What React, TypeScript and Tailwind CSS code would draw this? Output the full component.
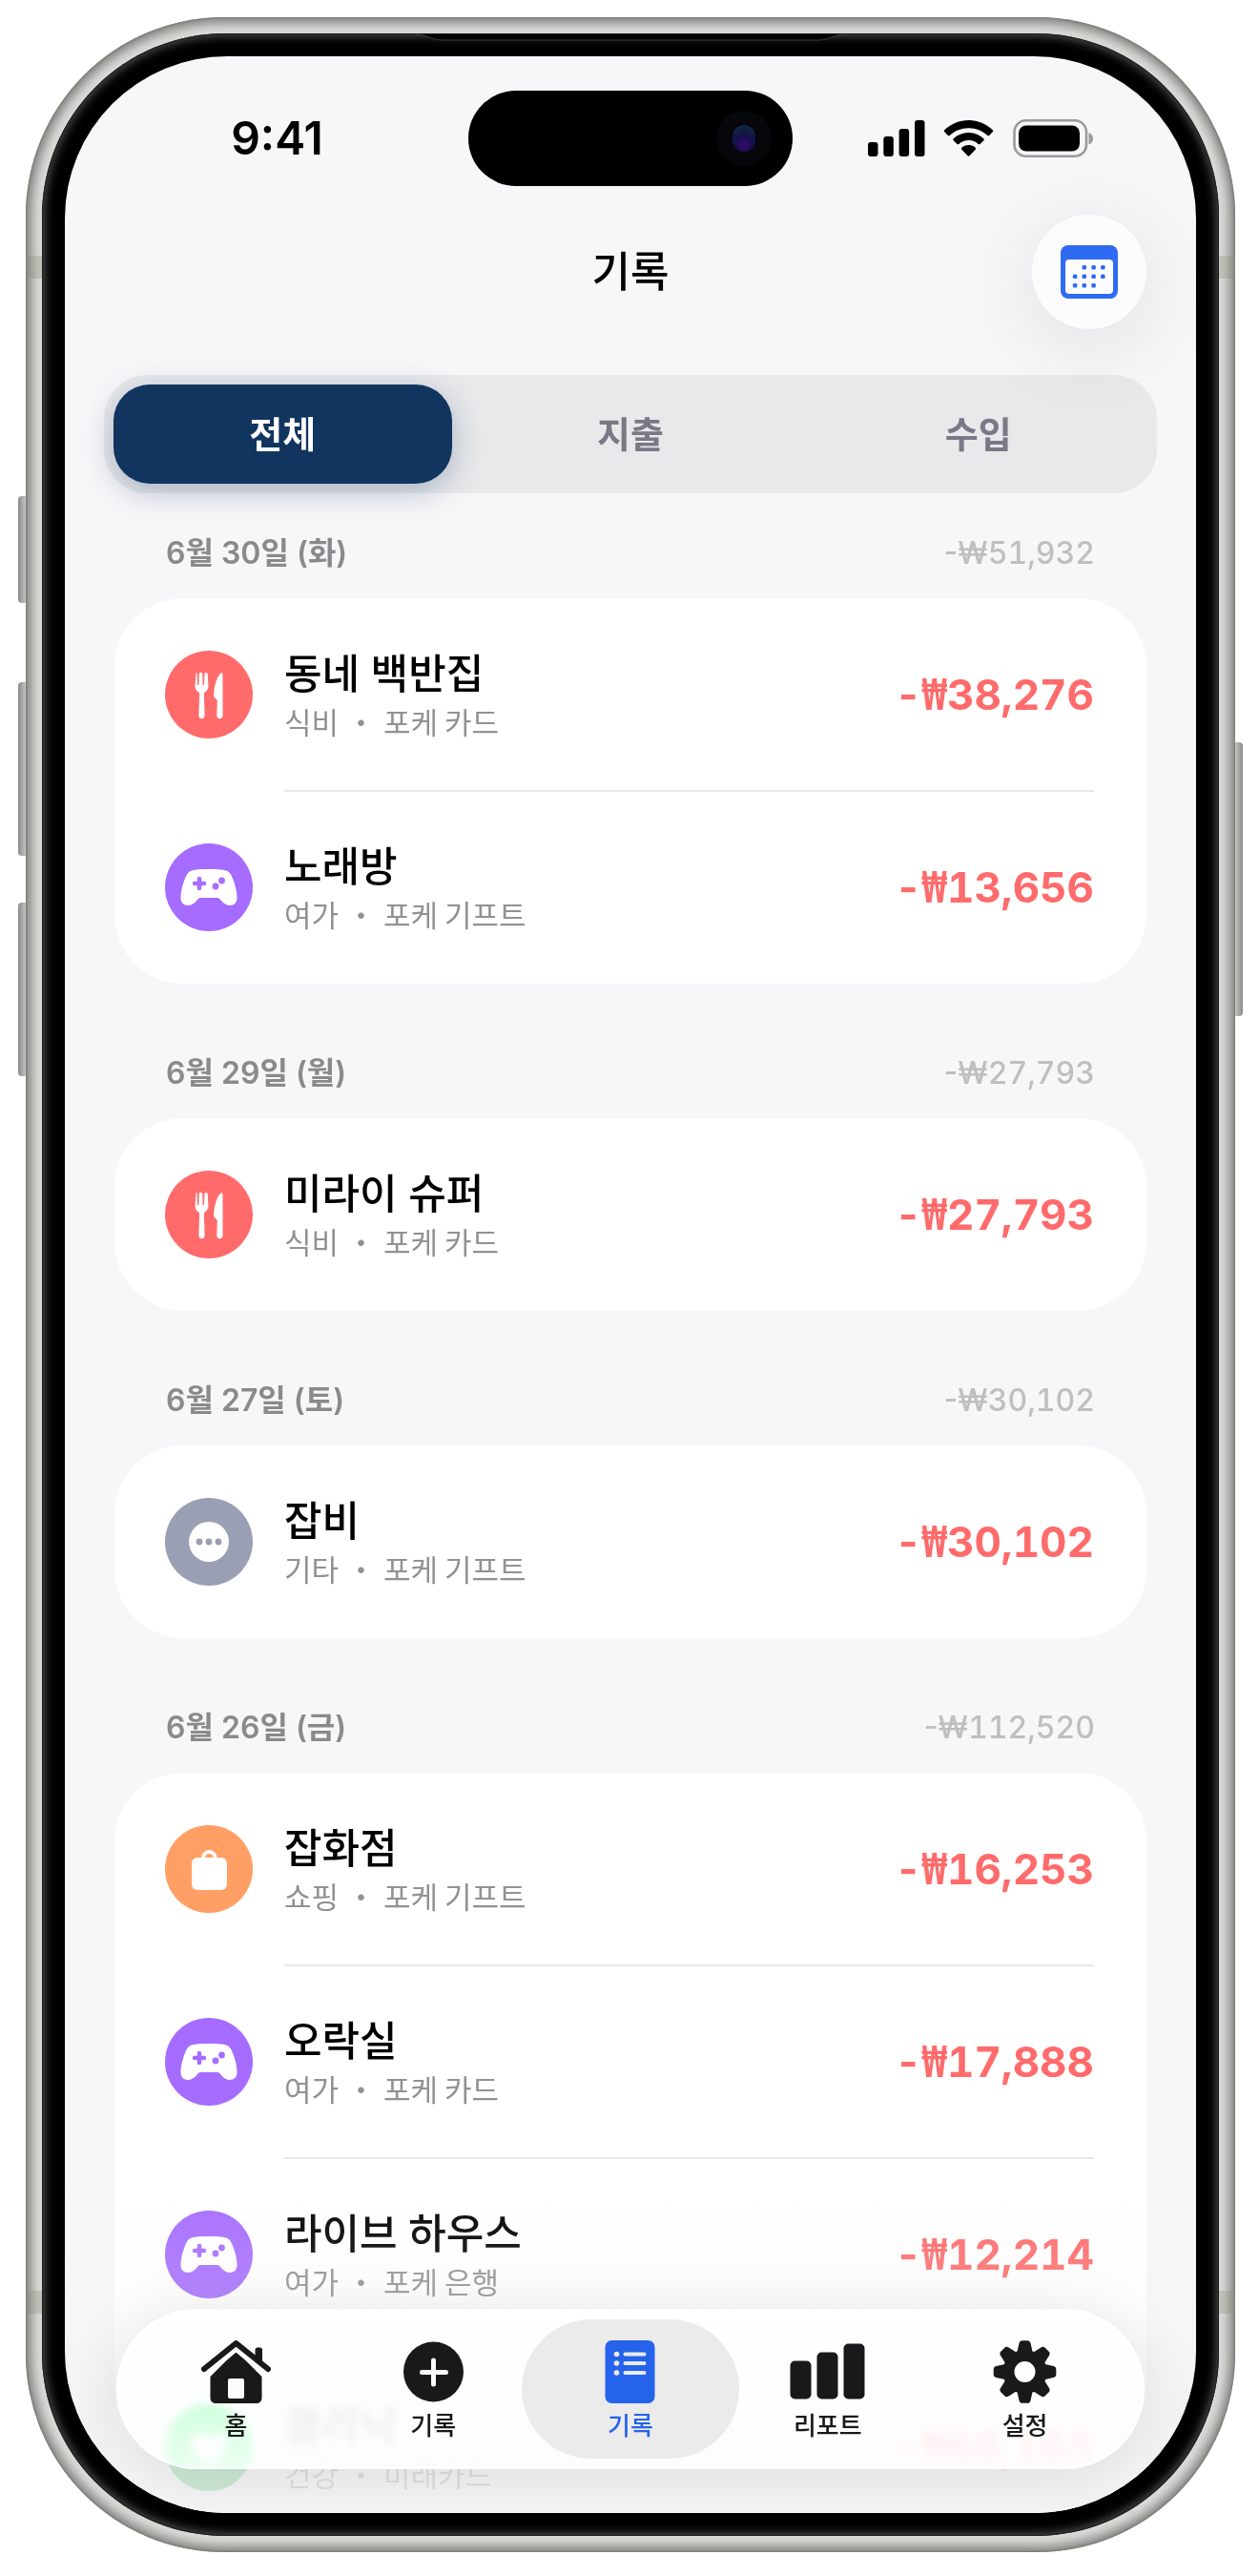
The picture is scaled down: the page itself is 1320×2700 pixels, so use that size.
import React, { useState } from 'react';
import { clsx } from 'clsx';

type Category = 'food' | 'play' | 'etc' | 'shop' | 'health';

interface Entry {
  title: string;
  label: string;
  wallet: string;
  amount: string;
  category: Category;
}

interface Day {
  date: string;
  total: string;
  entries: Entry[];
}

const days: Day[] = [
  {
    date: '6월 30일 (화)',
    total: '51,932',
    entries: [
      { title: '동네 백반집', label: '식비', wallet: '포케 카드', amount: '38,276', category: 'food' },
      { title: '노래방', label: '여가', wallet: '포케 기프트', amount: '13,656', category: 'play' },
    ],
  },
  {
    date: '6월 29일 (월)',
    total: '27,793',
    entries: [{ title: '미라이 슈퍼', label: '식비', wallet: '포케 카드', amount: '27,793', category: 'food' }],
  },
  {
    date: '6월 27일 (토)',
    total: '30,102',
    entries: [{ title: '잡비', label: '기타', wallet: '포케 기프트', amount: '30,102', category: 'etc' }],
  },
  {
    date: '6월 26일 (금)',
    total: '112,520',
    entries: [
      { title: '잡화점', label: '쇼핑', wallet: '포케 기프트', amount: '16,253', category: 'shop' },
      { title: '오락실', label: '여가', wallet: '포케 카드', amount: '17,888', category: 'play' },
      { title: '라이브 하우스', label: '여가', wallet: '포케 은행', amount: '12,214', category: 'play' },
      { title: '클리닉', label: '건강', wallet: '미래카드', amount: '66,165', category: 'health' },
    ],
  },
];

const badgeColor: Record<Category, string> = {
  food: 'bg-[#ff6b6b]',
  play: 'bg-[#a66cff]',
  etc: 'bg-[#9a9fb4]',
  shop: 'bg-[#ff9f66]',
  health: 'bg-[#34c759]',
};

function CategoryIcon({ category }: { category: Category }) {
  return (
    <svg viewBox="0 0 92 92" className="size-full" aria-hidden="true">
      {category === 'food' && (
        <g fill="#fff">
          <path d="M32 23c1 0 1.600.8 1.600 1.800L34 36h1.400l.3-11.500c0-1 .8-1.700 1.800-1.700s1.800.7 1.800 1.700L39.600 36H41l.4-11.200c0-1 .7-1.800 1.600-1.800 1 0 1.700.8 1.800 1.800l.6 11.700c.2 3.500-1.400 5.500-3.600 6.900-.8.500-1 1-.9 1.900l.7 22.500c0 2-1.200 3.500-3.100 3.500s-3.100-1.500-3.100-3.500l.7-22.500c0-.9-.2-1.400-1-1.900-2.200-1.400-3.700-3.400-3.500-6.900l.7-11.700c0-1 .7-1.800 1.700-1.800z" />
          <path d="M60.500 25v43c0 2-1.200 3.300-3.100 3.300s-3.100-1.300-3.100-3.300l.5-15c0-1-.3-1.600-1.200-2.200-1.700-1.200-2.600-2.500-2.500-4.800C51.500 37 54 29 57.500 24.500c1.500-2 3-1.800 3 .5z" />
        </g>
      )}
      {category === 'play' && (
        <>
          <path
            fill="#fff"
            d="M46 27c8 0 14 .4 18 1.500 3 .9 4.500 2.800 6 6C73 41 75.500 50 75.500 57c0 5-3 8-7.500 8-3.500 0-6-1.600-8.500-4.200C58 59 57 57 54.500 57h-17c-2.500 0-3.500 2-5 3.800C30 63.400 27.500 65 24 65c-4.500 0-7.500-3-7.500-8 0-7 2.500-16 5.500-22.500 1.500-3.200 3-5.100 6-6C32 27.400 38 27 46 27z"
          />
          <path d="M36 37v10M31 42h10" stroke="#a66cff" strokeWidth="4.500" strokeLinecap="round" />
          <circle cx="53" cy="45" r="3.400" fill="#a66cff" />
          <circle cx="59.500" cy="39" r="3.400" fill="#a66cff" />
        </>
      )}
      {category === 'etc' && (
        <>
          <circle cx="46" cy="46" r="21" fill="#fff" />
          <g fill="#9a9fb4">
            <circle cx="36" cy="46" r="3.400" />
            <circle cx="46" cy="46" r="3.400" />
            <circle cx="56" cy="46" r="3.400" />
          </g>
        </>
      )}
      {category === 'shop' && (
        <>
          <rect x="28" y="34" width="37" height="34" rx="6" fill="#fff" />
          <path d="M40 35c0-4 2.500-7 6.300-7s6.300 3 6.300 7" fill="none" stroke="#fff" strokeWidth="4" />
        </>
      )}
      {category === 'health' && (
        <path
          fill="#fff"
          d="M46 66C36 58 27 51 27 42c0-6 4-10 9.500-10 4 0 7.500 2 9.500 6 2-4 5.500-6 9.500-6C61 32 65 36 65 42c0 9-9 16-19 24z"
        />
      )}
    </svg>
  );
}

function CalendarIcon() {
  return (
    <svg viewBox="0 0 60 56" className="h-14 w-15" aria-hidden="true">
      <rect x="0" y="0" width="60" height="56" rx="8" fill="#2f6bf2" />
      <rect x="5" y="15" width="50" height="36" rx="4" fill="#fcfcfd" />
      <g fill="#2f6bf2">
        <rect x="22.500" y="21" width="4.600" height="4.600" rx="1.500" />
        <rect x="32.300" y="21" width="4.600" height="4.600" rx="1.500" />
        <rect x="42" y="21" width="4.600" height="4.600" rx="1.500" />
        <rect x="12.800" y="30.500" width="4.600" height="4.600" rx="1.500" />
        <rect x="22.500" y="30.500" width="4.600" height="4.600" rx="1.500" />
        <rect x="32.300" y="30.500" width="4.600" height="4.600" rx="1.500" />
        <rect x="42" y="30.500" width="4.600" height="4.600" rx="1.500" />
        <rect x="12.800" y="40" width="4.600" height="4.600" rx="1.500" />
        <rect x="22.500" y="40" width="4.600" height="4.600" rx="1.500" />
        <rect x="32.300" y="40" width="4.600" height="4.600" rx="1.500" />
      </g>
    </svg>
  );
}

function StatusIcons() {
  return (
    <svg viewBox="0 0 236 40" className="h-10 w-[236px]" aria-hidden="true">
      <rect x="0" y="24" width="10.500" height="15" rx="3" />
      <rect x="16.300" y="18" width="10.500" height="21" rx="3" />
      <rect x="32.600" y="10" width="10.500" height="29" rx="3" />
      <rect x="49" y="1" width="10.500" height="38" rx="3" />
      <path d="M105.500 1C115 1 124 4.800 130.800 11.200c.6.500.6 1.400.1 1.900l-3.700 3.800c-.5.500-1.300.5-1.900 0C120 12 113 9.200 105.500 9.200S91 12 85.700 16.900c-.6.500-1.400.5-1.900 0l-3.700-3.800c-.5-.5-.5-1.400.1-1.900C87 4.800 96 1 105.500 1z" />
      <path d="M105.500 14c6 0 11.500 2.300 15.800 6.200.6.500.6 1.400 0 2l-3.700 3.700c-.5.500-1.300.5-1.900 0-2.800-2.400-6.400-3.800-10.200-3.800s-7.400 1.400-10.200 3.800c-.6.500-1.400.5-1.900 0l-3.700-3.700c-.6-.6-.6-1.500 0-2C94 16.300 99.500 14 105.500 14z" />
      <path d="M105.500 27c2.700 0 5.200 1 7.100 2.700.6.500.6 1.400.1 2l-6.200 6.600c-.5.600-1.500.6-2 0l-6.200-6.600c-.5-.6-.5-1.500.1-2 1.900-1.700 4.400-2.700 7.100-2.700z" />
      <rect x="153.500" y="1.300" width="75.500" height="37.400" rx="12" fill="none" stroke="#9b9b9d" strokeWidth="2.600" />
      <rect x="158" y="6.500" width="64" height="27" rx="8" />
      <path d="M231.500 14c2.800 1 4.500 3.300 4.500 6.200s-1.700 5.200-4.500 6.200z" fill="#9b9b9d" />
    </svg>
  );
}

const navItems = [
  {
    label: '홈',
    icon: (
      <>
        <path d="M9.500 38 L36.500 11 L63.500 38 V60c0 3.500-2 6-5.500 6h-43C11.500 66 9.500 63.500 9.500 60z" />
        <path d="M2.500 31 L36.500 3 L70.500 31" fill="none" stroke="#fcfcfd" strokeWidth="15" strokeLinejoin="round" />
        <path d="M56.500 22V10c0-1.500 1-2.500 2.500-2.500h2.500c1.500 0 2.500 1 2.500 2.500v17z" />
        <path d="M3 30 L36.500 3 L70 30" fill="none" stroke="currentColor" strokeWidth="6" strokeLinecap="round" strokeLinejoin="round" />
        <rect x="28" y="40" width="17" height="21" rx="2" fill="#fcfcfd" />
      </>
    ),
  },
  {
    label: '기록',
    icon: (
      <>
        <circle cx="36.500" cy="33" r="31.500" />
        <path d="M36.500 21v25M24.500 33.500h25" stroke="#fcfcfd" strokeWidth="5" strokeLinecap="round" />
      </>
    ),
  },
  {
    label: '기록',
    icon: (
      <>
        <rect x="10.500" y="0" width="52" height="66" rx="7" />
        <g stroke="#ebebec" strokeWidth="4" strokeLinecap="round">
          <path d="M31.500 14.500h20M31.500 24h20M31.500 34h20" />
        </g>
        <g fill="#ebebec">
          <circle cx="22.500" cy="14.500" r="2.800" />
          <circle cx="22.500" cy="24" r="2.800" />
          <circle cx="22.500" cy="34" r="2.800" />
        </g>
      </>
    ),
  },
  {
    label: '리포트',
    icon: (
      <>
        <rect x="-2.500" y="21.500" width="22" height="40" rx="5" />
        <rect x="25.500" y="12.500" width="22" height="49" rx="5" />
        <rect x="53.500" y="3.500" width="22" height="58" rx="5" />
      </>
    ),
  },
  {
    label: '설정',
    icon: (
      <>
        {[0, 45, 90, 135, 180, 225, 270, 315].map(angle => (
          <path key={angle} d="M28 14 L30.500 3c.5-2 1.500-2.800 3.500-2.800h5c2 0 3 .8 3.500 2.800L45 14z" transform={`rotate(${angle} 36.500 33)`} />
        ))}
        <circle cx="36.500" cy="33" r="17" fill="none" stroke="currentColor" strokeWidth="12" />
      </>
    ),
  },
];

function StatusBar() {
  return (
    <div className="grid h-[136px] grid-cols-[1fr_340px_1fr] items-end">
      <div className="flex h-[100px] items-center justify-center pl-[22px] text-5xl font-semibold">9:41</div>
      <div className="flex h-[100px] items-center justify-end rounded-full bg-black pr-9">
        <div className="flex size-[30px] items-center justify-center rounded-full bg-[#05060c] ring-14 ring-[#05070a]">
          <div className="h-7 w-6 rounded-full bg-[radial-gradient(circle_at_50%_75%,#3a0a6e_0%,#14104a_40%,#0e2740_80%)]" />
        </div>
      </div>
      <div className="flex h-[100px] items-center justify-center pr-[29px]">
        <StatusIcons />
      </div>
    </div>
  );
}

function EntryRow({ entry }: { entry: Entry }) {
  return (
    <li className="group flex gap-[33px]">
      <div className="flex h-[200px] items-center">
        <div className={clsx('size-[92px] shrink-0 rounded-full', badgeColor[entry.category])}>
          <CategoryIcon category={entry.category} />
        </div>
      </div>
      <div className="flex flex-1 items-center justify-between border-[#e7e7e9] group-not-last:h-[202px] group-not-last:border-b-2">
        <div className="h-[104px]">
          <h3 className="text-[43px] leading-[60px] font-medium text-black">{entry.title}</h3>
          <p className="flex gap-2 font-['Noto_Sans_CJK_KR',sans-serif] text-[31px] leading-10 text-[#919195]">
            <span>{entry.label}</span>
            <span>・</span>
            <span>{entry.wallet}</span>
          </p>
        </div>
        <span className="text-[44px] font-bold text-[#ff6b6b] tabular-nums">
          -<span className="font-['DejaVu_Sans_Mono',monospace]">₩</span>
          {entry.amount}
        </span>
      </div>
    </li>
  );
}

function DaySection({ day }: { day: Day }) {
  return (
    <section>
      <div className="flex items-center justify-between px-[54px] pt-[39px] pb-[23px] text-[32px] leading-[48px]">
        <h2 className="font-semibold text-[#8a8a8d]">{day.date}</h2>
        <span className="font-medium text-[#bfbfc2]">
          -₩<span className="tabular-nums">{day.total}</span>
        </span>
      </div>
      <ul className="rounded-[72px] bg-white py-px pr-[55px] pl-[53px]">
        {day.entries.map(entry => (
          <EntryRow key={entry.title} entry={entry} />
        ))}
      </ul>
    </section>
  );
}

function BottomNav() {
  const [active, setActive] = useState(2);

  return (
    <nav className="absolute inset-x-[54px] bottom-[46px] grid h-[168px] grid-cols-5 rounded-full bg-white/80 px-[22px] py-[11px] shadow-[0_8px_60px_rgba(0,0,0,0.1)] ring-2 ring-white/70 backdrop-blur-[4px] backdrop-saturate-[4] ring-inset">
      {navItems.map((item, i) => (
        <button
          key={i}
          type="button"
          onClick={() => setActive(i)}
          className={clsx(
            '-mx-[11px] flex flex-col items-center gap-2 rounded-full pt-[22px] text-[26px] leading-8 font-medium',
            i === active ? 'bg-[#ebebec] text-[#2563eb]' : 'text-[#19191b]'
          )}
        >
          <svg viewBox="0 0 73 66" className="h-[66px] w-[73px] overflow-visible fill-current" aria-hidden="true">
            {item.icon}
          </svg>
          {item.label}
        </button>
      ))}
    </nav>
  );
}

// Metal edge, side keys and black bezel of the handset
function Phone({ children }: { children: React.ReactNode }) {
  return (
    <div className="relative h-full">
      <div className="absolute top-[502px] -left-2 h-28 w-4 rounded-sm bg-linear-to-r from-[#8b8b89] via-[#c4c4c2] to-[#8b8b89]" />
      <div className="absolute top-[697px] -left-2 h-[182px] w-4 rounded-sm bg-linear-to-r from-[#8b8b89] via-[#c4c4c2] to-[#8b8b89]" />
      <div className="absolute top-[928px] -left-2 h-[182px] w-4 rounded-sm bg-linear-to-r from-[#8b8b89] via-[#c4c4c2] to-[#8b8b89]" />
      <div className="absolute top-[760px] -right-2 h-[287px] w-4 rounded-sm bg-linear-to-l from-[#8b8b89] via-[#c4c4c2] to-[#8b8b89]" />
      <div className="relative h-full rounded-[208px] bg-[#dcdcda] p-[17px] shadow-[inset_0_0_2px_1px_#7a7a77,inset_0_0_12px_6px_#7f7f7c]">
        <div className="absolute inset-x-0 top-[250px] h-6 bg-[#8a8a7a]/30" />
        <div className="absolute inset-x-0 bottom-[250px] h-6 bg-[#8a8a7a]/30" />
        <div className="relative h-full rounded-[192px] bg-black p-6 shadow-[inset_0_0_1px_1px_#1c1c1c,inset_0_0_12px_1px_#6b6b6b]">
          <svg viewBox="0 0 450 8" className="absolute top-0 left-1/2 h-2 w-[450px] -translate-x-1/2" aria-hidden="true">
            <path d="M0 1c12 0 16 6 28 6h394c12 0 16-6 28-6V0H0z" stroke="#3a3a3a" />
          </svg>
          {children}
        </div>
      </div>
    </div>
  );
}

const filters = ['전체', '지출', '수입'];

export default function App() {
  const [filter, setFilter] = useState('전체');

  return (
    <div className="h-screen overflow-hidden bg-white pt-[18px] pr-[25px] pb-[25px] pl-[27px] font-['Inter','Noto_Sans_CJK_KR',sans-serif] text-black">
      <Phone>
        <main className="relative h-full overflow-hidden rounded-[170px] bg-[#f7f7f9]">
          <StatusBar />
          <header className="mt-[30px] grid grid-cols-[1fr_auto_1fr] items-center px-[52px]">
            <h1 className="col-start-2 text-[44px] font-medium">기록</h1>
            <button
              type="button"
              aria-label="달력"
              className="flex size-[120px] items-center justify-center justify-self-end rounded-full bg-[#fcfcfd] shadow-[0_16px_90px_rgba(0,0,0,0.1)]"
            >
              <CalendarIcon />
            </button>
          </header>

          <div className="mx-[41px] mt-12 grid h-[124px] grid-cols-3 gap-[10px] rounded-[46px] bg-[#e9e9eb] p-[10px]">
            {filters.map(name => (
              <button
                key={name}
                type="button"
                onClick={() => setFilter(name)}
                className={clsx(
                  'rounded-[38px] text-[38px] font-bold',
                  name === filter ? 'bg-[#11355f] text-white shadow-[0_8px_32px_rgba(17,53,95,0.3)]' : 'text-[#7b7986]'
                )}
              >
                {name}
              </button>
            ))}
          </div>

          <div className="mx-[52px] flex flex-col gap-[31px]">
            {days.map(day => (
              <DaySection key={day.date} day={day} />
            ))}
          </div>

          <div className="pointer-events-none absolute inset-x-0 bottom-0 h-[360px] bg-linear-to-b from-[#f2f2f4]/0 via-[#f2f2f4]/20 via-40% to-[#f2f2f4]/80 to-85%" />
          <BottomNav />
        </main>
      </Phone>
    </div>
  );
}
